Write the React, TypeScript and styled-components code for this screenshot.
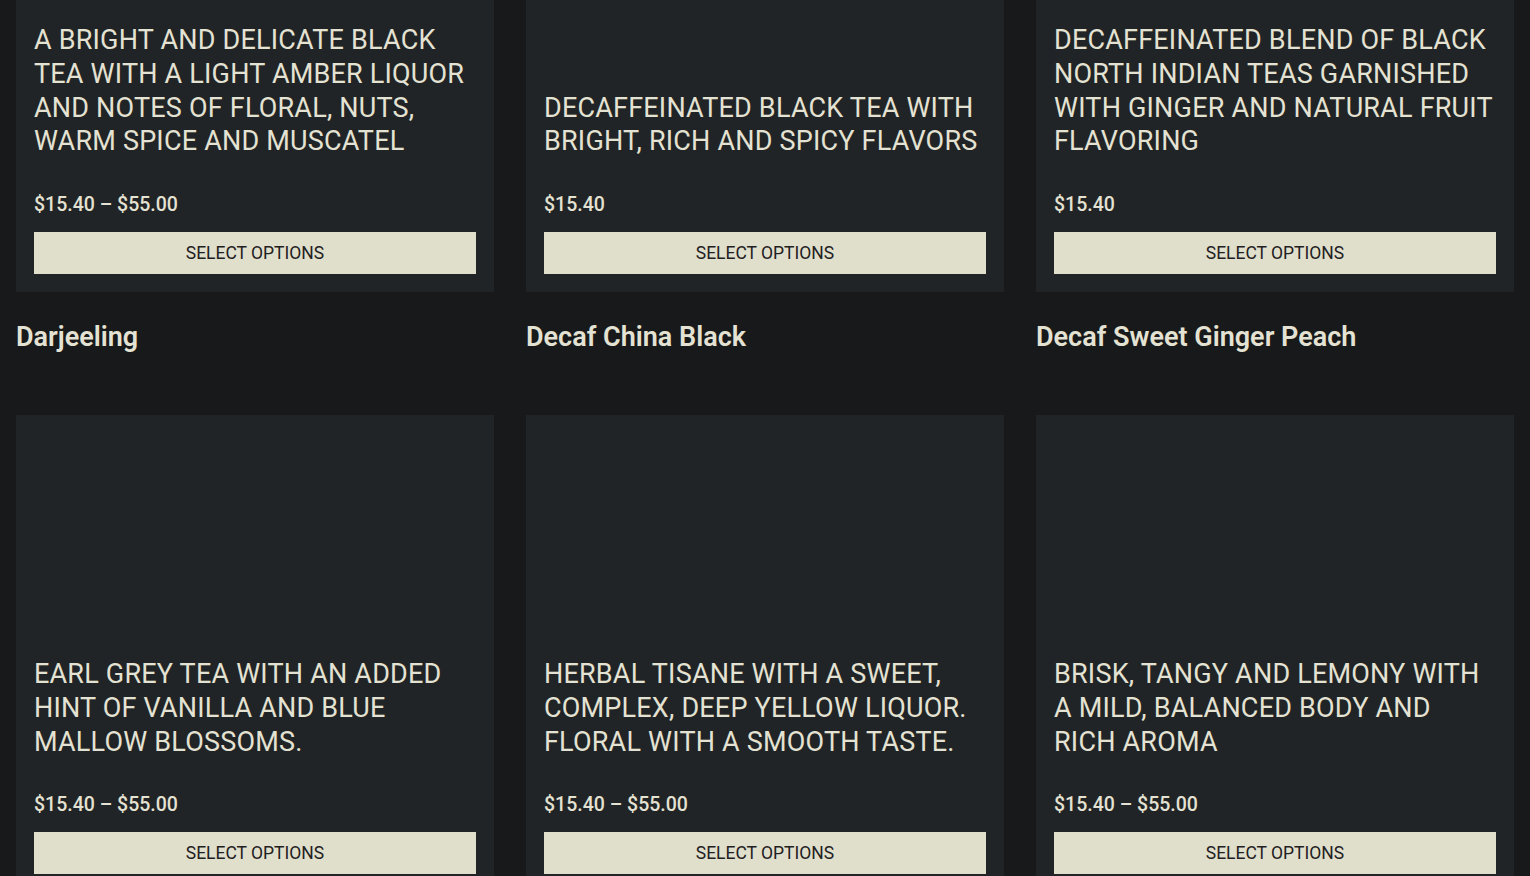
import React from "react";
import styled, { createGlobalStyle } from "styled-components";

const Global = createGlobalStyle`
  html, body {
    margin: 0;
    padding: 0;
    overflow: hidden;
    background: #18191b;
  }
  body {
    font-family: Roboto, "Liberation Sans", Arial, sans-serif;
    color: #e4e2d2;
  }
`;

const Page = styled.div`
  padding: 0 16px;
  margin-top: -219px;
`;

const Grid = styled.div`
  display: grid;
  grid-template-columns: repeat(3, 1fr);
  column-gap: 32px;
  row-gap: 61px;
`;

const Item = styled.article`
  display: flex;
  flex-direction: column;
`;

const Card = styled.div`
  flex: 1;
  display: flex;
  flex-direction: column;
  background: #212426;
  padding: 18px;
`;

const ImageArea = styled.div`
  height: 225px;
  flex-shrink: 0;
`;

const Description = styled.p`
  margin: auto 0 0;
  font-size: 27px;
  line-height: 33.75px;
  font-weight: 400;
  text-transform: uppercase;
  color: #e4e2d2;
  letter-spacing: 0.2px;
`;

const Price = styled.div`
  margin-top: 32px;
  font-size: 19.5px;
  line-height: 28px;
  font-weight: 500;
  color: #e4e2d2;
`;

const Button = styled.button`
  margin-top: 13px;
  height: 42px;
  width: 100%;
  border: 0;
  border-radius: 0;
  background: #e0dfcc;
  color: #1f2022;
  font-family: Roboto, "Liberation Sans", Arial, sans-serif;
  font-size: 17.5px;
  font-weight: 400;
  text-transform: uppercase;
  cursor: pointer;
`;

const Title = styled.h2`
  margin: 28px 0 0;
  font-size: 27px;
  line-height: 34px;
  font-weight: 600;
  color: #e4e2d2;
`;

type Product = { name: string; desc: string; price: string };

const products: Product[] = [
  {
    name: "Darjeeling",
    desc: "A bright and delicate black tea with a light amber liquor and notes of floral, nuts, warm spice and muscatel",
    price: "$15.40 – $55.00",
  },
  {
    name: "Decaf China Black",
    desc: "Decaffeinated black tea with bright, rich and spicy flavors",
    price: "$15.40",
  },
  {
    name: "Decaf Sweet Ginger Peach",
    desc: "Decaffeinated blend of black North Indian teas garnished with ginger and natural fruit flavoring",
    price: "$15.40",
  },
  {
    name: "Earl Grey Crème",
    desc: "Earl Grey tea with an added hint of vanilla and blue mallow blossoms.",
    price: "$15.40 – $55.00",
  },
  {
    name: "Egyptian Chamomile",
    desc: "Herbal tisane with a sweet, complex, deep yellow liquor. Floral with a smooth taste.",
    price: "$15.40 – $55.00",
  },
  {
    name: "English Breakfast",
    desc: "Brisk, tangy and lemony with a mild, balanced body and rich aroma",
    price: "$15.40 – $55.00",
  },
];

export default function App() {
  return (
    <>
      <Global />
      <Page>
        <Grid>
          {products.map((p) => (
            <Item key={p.name}>
              <Card>
                <ImageArea />
                <Description>{p.desc}</Description>
                <Price>{p.price}</Price>
                <Button type="button">Select options</Button>
              </Card>
              <Title>{p.name}</Title>
            </Item>
          ))}
        </Grid>
      </Page>
    </>
  );
}
